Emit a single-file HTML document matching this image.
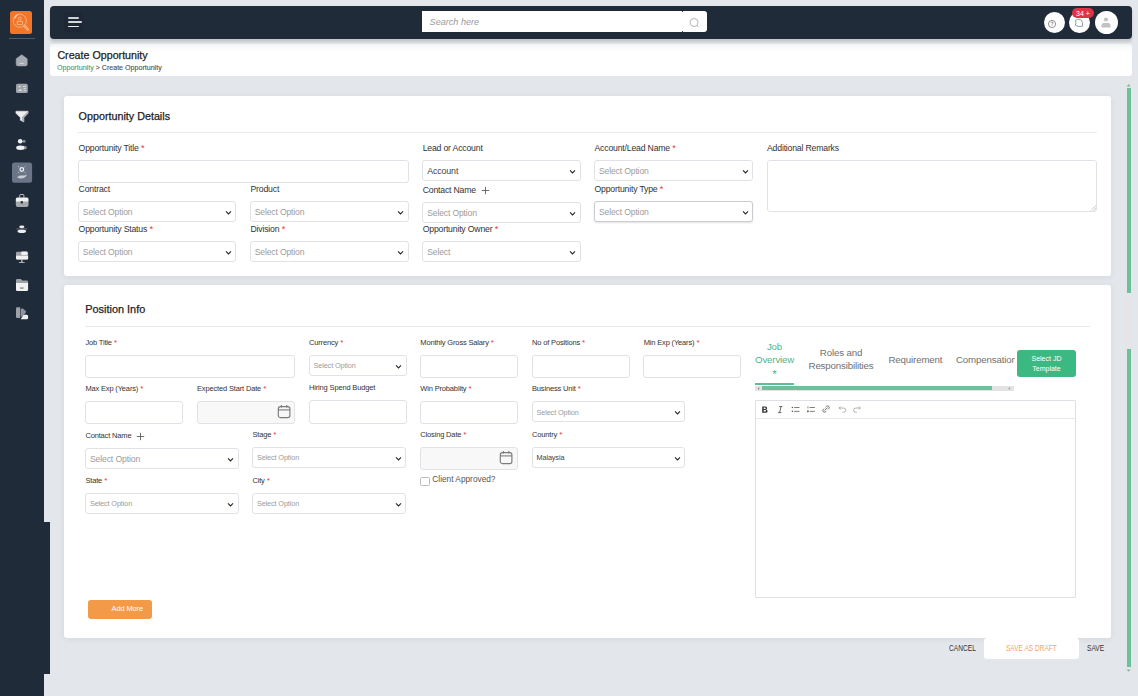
<!DOCTYPE html>
<html><head><meta charset="utf-8"><style>
html,body{margin:0;padding:0;width:1138px;height:696px;overflow:hidden;background:#e3e6ea;font-family:"Liberation Sans",sans-serif;position:relative}
</style></head><body>
<div style="position:absolute;left:0px;top:0px;width:44px;height:696px;background:#202b39"></div>
<div style="position:absolute;left:44px;top:522px;width:6px;height:152px;background:#202b39"></div>
<div style="position:absolute;left:9.5px;top:10.5px;width:22.5px;height:23.1px;background:#f37528;border-radius:2.5px"></div>
<svg style="position:absolute;left:0;top:0" width="40" height="40" viewBox="0 0 40 40">
<circle cx="19.8" cy="20.7" r="6.6" fill="none" stroke="#f8c39c" stroke-width="0.75"/>
<path d="M14.6 18.5 Q15.5 16 17.5 14.8" fill="none" stroke="#fbd7bd" stroke-width="1.2"/>
<circle cx="19.8" cy="18.6" r="1.5" fill="none" stroke="#f8c39c" stroke-width="0.75"/>
<rect x="17.2" y="21.3" width="5.2" height="3.3" fill="none" stroke="#f8c39c" stroke-width="0.75"/>
<path d="M24.3 25.8 L27.9 29.6" fill="none" stroke="#f8c39c" stroke-width="2.3" stroke-linecap="round"/>
<path d="M24.3 25.8 L27.9 29.6" fill="none" stroke="#f37528" stroke-width="0.8" stroke-linecap="round"/>
</svg>
<div style="position:absolute;left:9px;top:38px;width:26px;height:1px;background:#4d5868"></div>
<svg style="position:absolute;left:0;top:0" width="44" height="330" viewBox="0 0 44 330">
<path d="M16.2 58.8 L21.7 54.8 L27.2 58.8 V64.2 Q27.2 65.9 25.5 65.9 H17.9 Q16.2 65.9 16.2 64.2 Z" fill="#a6aab1" stroke="#a6aab1" stroke-width="0.6" stroke-linejoin="round"/>
<rect x="19.8" y="62.9" width="3.9" height="1" fill="#d6d8db"/>
<rect x="16" y="83.8" width="11.8" height="9.3" rx="1.6" fill="#9ea2a9"/>
<rect x="18.8" y="85.8" width="1.6" height="1.6" fill="#e6e7e9"/><path d="M17.8 90.8 Q18.8 89 20.5 89.2 Q21.8 89.4 22.2 90.8Z" fill="#e6e7e9"/>
<rect x="23" y="86" width="3" height="0.9" fill="#d8dadd"/><rect x="23.5" y="88" width="2.5" height="0.9" fill="#d8dadd"/><rect x="23.5" y="90" width="2.5" height="0.9" fill="#d8dadd"/>
<path d="M15.9 111.2 H28.1 V113.2 L23.9 117.6 V121.9 L20.3 120.2 V117.6 L15.9 113.2Z" fill="#eeeeef" stroke="#eeeeef" stroke-width="0.5" stroke-linejoin="round"/>
<path d="M28.1 111.2 V113.2 L23.9 117.6 V121.9 L22 121 V117 Z" fill="#a9adb3"/>
<circle cx="24" cy="141.3" r="1.5" fill="#8d939b"/><circle cx="20.2" cy="141.3" r="2.3" fill="#f2f2f2"/>
<ellipse cx="23.5" cy="147.6" rx="3.4" ry="1.9" fill="#8d939b"/><ellipse cx="20.3" cy="147.7" rx="4.1" ry="2.2" fill="#f2f2f2"/>
<rect x="12" y="162.6" width="20.1" height="20.1" rx="2.5" fill="#6a7588"/>
<circle cx="21.8" cy="169.5" r="1.8" fill="none" stroke="#f0f1f3" stroke-width="1.3"/>
<path d="M19 167 L18.2 166.3 M24.6 167 L25.4 166.3 M19 172 L18.2 172.7 M24.6 172 L25.4 172.7" stroke="#dfe2e7" stroke-width="0.9"/>
<path d="M17.2 177.5 Q18.5 175.2 21 175.4 Q23 175.6 24.5 175.4 Q26 175 27 174.6 Q26 177.5 23 178.3 Q20 178.8 17.2 177.5Z" fill="#c9cdd5"/>
<path d="M19.7 197.7 V195.4 Q19.7 194.5 20.6 194.5 H23 Q23.9 194.5 23.9 195.4 V197.7" fill="none" stroke="#e5e5e5" stroke-width="0.8"/>
<rect x="15.8" y="197.5" width="12.7" height="5" rx="1.5" fill="#f2f2f2"/>
<path d="M15.8 201.5 H28.5 V205 Q28.5 206.9 26.6 206.9 H17.7 Q15.8 206.9 15.8 205Z" fill="#a6a9ae"/>
<rect x="20.7" y="201.2" width="2.2" height="2.2" fill="#202b39"/>
<ellipse cx="21.8" cy="226.8" rx="2.6" ry="1.4" fill="#eeeeee"/>
<ellipse cx="21.8" cy="231.2" rx="4.3" ry="1.8" fill="#eeeeee"/>
<rect x="16.5" y="228.6" width="10.6" height="0.7" fill="#8a9098"/>
<path d="M16 253 Q16 251.8 17.2 251.8 H26.9 Q28.1 251.8 28.1 253 V258.3 Q28.1 259.5 26.9 259.5 H17.2 Q16 259.5 16 258.3Z" fill="#9fa3a9"/>
<path d="M16 255.8 H28.1 V258.3 Q28.1 259.5 26.9 259.5 H17.2 Q16 259.5 16 258.3Z" fill="#f0f0f0"/>
<rect x="21.2" y="251.5" width="6.3" height="3.4" rx="1.2" fill="#f0f0f0"/>
<rect x="21.3" y="259.5" width="1.1" height="2.6" fill="#dcdcdc"/><rect x="18.9" y="261.9" width="5.8" height="0.9" rx="0.4" fill="#dcdcdc"/>
<path d="M16 280.3 Q16 279 17.3 279 H20.8 L22.3 280.5 H26.8 Q28.1 280.5 28.1 281.8 V283.5 H16Z" fill="#9fa3a9"/>
<path d="M16 283 H28.1 V289.8 Q28.1 291.1 26.8 291.1 H17.3 Q16 291.1 16 289.8Z" fill="#f2f2f2"/>
<rect x="20" y="287.5" width="3.6" height="1.1" fill="#6b7280"/>
<path d="M16 308.5 Q16 307.2 17.3 307.2 H20.1 V318.1 H17.3 Q16 318.1 16 316.8Z" fill="#9da1a8"/>
<path d="M20.6 309 Q21.5 308 22.8 308.6 L25.5 310.8 Q26.5 311.8 25.5 313 L22.5 316.5 H20.6Z" fill="#8f949b"/>
<path d="M20.6 319.3 L23.3 315.2 Q24 314.5 25 314.7 H26.8 Q28.1 314.9 28.1 316.2 V318 Q28.1 319.3 26.8 319.3Z" fill="#f0f0f0"/>
</svg>
<div style="position:absolute;left:50px;top:44px;width:1082px;height:32px;background:linear-gradient(#f2f3f4,#fbfbfb 4px,#fff 8px);border-radius:3px"></div>
<div style="position:absolute;left:50px;top:6px;width:1082px;height:33px;background:#202b39;border-radius:4px;box-shadow:0 3px 3px rgba(0,0,0,0.14)"></div>
<div style="position:absolute;left:64.4px;top:12.4px;width:18.89999999999999px;height:19.700000000000003px;background:#1d2735;border-radius:3px"></div>
<div style="position:absolute;left:67.6px;top:17.1px;width:11.700000000000003px;height:1.5999999999999979px;background:#cfd1d4;border-radius:1px"></div>
<div style="position:absolute;left:67.6px;top:21.2px;width:14.700000000000003px;height:1.6000000000000014px;background:#d6d8da;border-radius:1px"></div>
<div style="position:absolute;left:67.6px;top:25.5px;width:11.700000000000003px;height:1.5px;background:#ebebeb;border-radius:1px"></div>
<div style="position:absolute;left:421.7px;top:10.6px;width:285.09999999999997px;height:21.699999999999996px;background:#fff;border-radius:0 3px 3px 0"></div>
<div style="position:absolute;left:682px;top:10.6px;width:1px;height:1px;background:#3a4452"></div><div style="position:absolute;left:682px;top:31.3px;width:1px;height:1px;background:#3a4452"></div>
<div style="position:absolute;left:429.6px;top:17.57px;font-size:9.1px;line-height:1;color:#9a9a9a;white-space:nowrap;font-style:italic">Search here</div>
<svg style="position:absolute;left:688px;top:17px" width="12" height="12" viewBox="0 0 12 12"><circle cx="6.1" cy="5.5" r="4" fill="none" stroke="#ababab" stroke-width="0.9"/><line x1="8.9" y1="8.4" x2="10.6" y2="10.1" stroke="#ababab" stroke-width="0.9"/></svg>
<div style="position:absolute;left:1044px;top:12px;width:21px;height:21px;border-radius:50%;background:#fff"></div>
<svg style="position:absolute;left:1046px;top:17.6px" width="12" height="12" viewBox="0 0 12 12"><circle cx="6" cy="6" r="3.6" fill="none" stroke="#777" stroke-width="0.8"/><path d="M4.9 5.1 Q5 4 6 4 Q7.1 4 7.1 5 Q7.1 5.7 6 6.1 V6.6" fill="none" stroke="#777" stroke-width="0.7"/><circle cx="6" cy="7.7" r="0.4" fill="#777"/></svg>
<div style="position:absolute;left:1069px;top:12px;width:20.5px;height:21px;border-radius:50%;background:#fff"></div>
<svg style="position:absolute;left:1073px;top:16.5px" width="12" height="12" viewBox="0 0 12 12"><path d="M2.6 3.4 Q4.5 1.6 7.2 2.4 Q9.2 3.2 9.3 5.6 L9.6 8.6 L8.2 9.4 Q5.5 9.8 3.2 8.6 L2.4 8.2 Q3.2 6.5 2.6 3.4Z" fill="none" stroke="#7a7f88" stroke-width="0.8"/><path d="M9.3 8.8 L10 9.8" stroke="#7a90b0" stroke-width="0.7"/></svg>
<div style="position:absolute;left:1072.4px;top:8.3px;width:21.199999999999818px;height:9.3px;background:#dc3545;border-radius:5px"></div>
<div style="position:absolute;left:1076px;top:9.65px;font-size:7px;line-height:1;color:#fff;white-space:nowrap;">34 +</div>
<div style="position:absolute;left:1094.5px;top:10.5px;width:23px;height:23px;border-radius:50%;background:#fff"></div>
<svg style="position:absolute;left:1099px;top:15px" width="14" height="14" viewBox="0 0 14 14"><circle cx="7" cy="4.5" r="2.1" fill="#c2c2c2"/><path d="M2.5 12.5 V10.5 Q2.5 8 5 8 H9 Q11.5 8 11.5 10.5 V12.5Z" fill="#c2c2c2"/></svg>
<div style="position:absolute;left:57.4px;top:49.51px;font-size:10.7px;line-height:1;color:#222;white-space:nowrap;-webkit-text-stroke:0.25px #222">Create Opportunity</div>
<div style="position:absolute;left:57.4px;top:63.57px;font-size:7.8px;line-height:1;color:#4a4a4a;white-space:nowrap;transform:scaleX(0.91);transform-origin:0 0;-webkit-text-stroke:0.1px #4a4a4a"><span style="color:#46ad84">Opportunity</span> &gt; Create Opportunity</div>
<div style="position:absolute;left:1125.2px;top:81.2px;width:6.7999999999999545px;height:592.3px;background:#e5e4e6"></div>
<div style="position:absolute;left:1126.8px;top:87.9px;width:4.2999999999999545px;height:205.1px;background:#6cc19d"></div>
<div style="position:absolute;left:1126.8px;top:349px;width:4.2999999999999545px;height:318px;background:#6cc19d"></div>
<svg style="position:absolute;left:1125px;top:82px" width="7" height="6" viewBox="0 0 7 6"><path d="M1.6 4.4 L3.6 2 L5.6 4.4Z" fill="#6cc19d"/></svg>
<svg style="position:absolute;left:1125px;top:667.5px" width="7" height="6" viewBox="0 0 7 6"><path d="M1.6 1.4 L3.6 3.8 L5.6 1.4Z" fill="#6cc19d"/></svg>
<div style="position:absolute;left:64px;top:96px;width:1047px;height:179.5px;background:#fff;border-radius:3px;box-shadow:0 1px 6px rgba(40,50,70,0.08)"></div>
<div style="position:absolute;left:64px;top:285px;width:1047px;height:352.5px;background:#fff;border-radius:3px;box-shadow:0 1px 6px rgba(40,50,70,0.08)"></div>
<div style="position:absolute;left:78.6px;top:110.56px;font-size:10.75px;line-height:1;color:#222;white-space:nowrap;-webkit-text-stroke:0.25px #222">Opportunity Details</div>
<div style="position:absolute;left:78px;top:132px;width:1019px;height:1px;background:#ebebeb"></div>
<div style="position:absolute;left:78.6px;top:143.60px;font-size:8.7px;line-height:1;color:#333;white-space:nowrap;letter-spacing:-0.19px">Opportunity Title<span style="color:#e53935;font-size:1.06em;line-height:0"> *</span></div>
<div style="position:absolute;left:422.7px;top:143.60px;font-size:8.7px;line-height:1;color:#333;white-space:nowrap;letter-spacing:-0.19px">Lead or Account</div>
<div style="position:absolute;left:594.5px;top:143.60px;font-size:8.7px;line-height:1;color:#333;white-space:nowrap;letter-spacing:-0.19px">Account/Lead Name<span style="color:#e53935;font-size:1.06em;line-height:0"> *</span></div>
<div style="position:absolute;left:767px;top:144.00px;font-size:8.7px;line-height:1;color:#333;white-space:nowrap;letter-spacing:-0.19px">Additional Remarks</div>
<div style="position:absolute;left:77.5px;top:159.5px;width:331.0px;height:23.19999999999999px;box-sizing:border-box;border:1px solid #dfe2e7;border-radius:3px;background:#fff"></div>
<div style="position:absolute;left:422.2px;top:160.2px;width:158.59999999999997px;height:20.900000000000006px;box-sizing:border-box;border:1px solid #dfe2e7;border-radius:3px;background:#fff;"><div style="position:absolute;left:4px;top:5.60px;font-size:8.9px;letter-spacing:-0.15px;line-height:1;color:#444;white-space:nowrap">Account</div><svg style="position:absolute;right:3.5px;top:7.950000000000003px" width="7" height="5" viewBox="0 0 7 5"><path d="M1 1.4 L3.5 3.9 L6 1.4" fill="none" stroke="#222" stroke-width="1.05"/></svg></div>
<div style="position:absolute;left:594.0px;top:160.2px;width:159.20000000000005px;height:20.900000000000006px;box-sizing:border-box;border:1px solid #dfe2e7;border-radius:3px;background:#fff;"><div style="position:absolute;left:4px;top:5.75px;font-size:8.6px;letter-spacing:-0.15px;line-height:1;color:#9c9c9c;white-space:nowrap">Select Option</div><svg style="position:absolute;right:3.5px;top:7.950000000000003px" width="7" height="5" viewBox="0 0 7 5"><path d="M1 1.4 L3.5 3.9 L6 1.4" fill="none" stroke="#222" stroke-width="1.05"/></svg></div>
<div style="position:absolute;left:766.5px;top:159.5px;width:330.29999999999995px;height:52.30000000000001px;box-sizing:border-box;border:1px solid #dfe2e7;border-radius:3px;background:#fff"></div>
<svg style="position:absolute;left:1089px;top:204px" width="8" height="8" viewBox="0 0 8 8"><path d="M7 1.6 L2 6.6 M7 4.1 L4.5 6.6" stroke="#888" stroke-width="0.7" stroke-dasharray="0.8 0.5"/></svg>
<div style="position:absolute;left:78.6px;top:185.00px;font-size:8.7px;line-height:1;color:#333;white-space:nowrap;letter-spacing:-0.19px">Contract</div>
<div style="position:absolute;left:250.5px;top:185.00px;font-size:8.7px;line-height:1;color:#333;white-space:nowrap;letter-spacing:-0.19px">Product</div>
<div style="position:absolute;left:422.7px;top:186.31px;font-size:8.7px;line-height:1;color:#333;white-space:nowrap;letter-spacing:-0.19px">Contact Name</div>
<svg style="position:absolute;left:481px;top:185.5px" width="9" height="9" viewBox="0 0 9 9"><path d="M4.5 0.8 V8.2 M0.8 4.5 H8.2" stroke="#555" stroke-width="0.85"/></svg>
<div style="position:absolute;left:594.5px;top:184.70px;font-size:8.7px;line-height:1;color:#333;white-space:nowrap;letter-spacing:-0.19px">Opportunity Type<span style="color:#e53935;font-size:1.06em;line-height:0"> *</span></div>
<div style="position:absolute;left:77.8px;top:200.8px;width:158.5px;height:21.299999999999983px;box-sizing:border-box;border:1px solid #dfe2e7;border-radius:3px;background:#fff;"><div style="position:absolute;left:4px;top:5.95px;font-size:8.6px;letter-spacing:-0.15px;line-height:1;color:#9c9c9c;white-space:nowrap">Select Option</div><svg style="position:absolute;right:3.5px;top:8.149999999999991px" width="7" height="5" viewBox="0 0 7 5"><path d="M1 1.4 L3.5 3.9 L6 1.4" fill="none" stroke="#222" stroke-width="1.05"/></svg></div>
<div style="position:absolute;left:249.7px;top:200.8px;width:159.3px;height:21.299999999999983px;box-sizing:border-box;border:1px solid #dfe2e7;border-radius:3px;background:#fff;"><div style="position:absolute;left:4px;top:5.95px;font-size:8.6px;letter-spacing:-0.15px;line-height:1;color:#9c9c9c;white-space:nowrap">Select Option</div><svg style="position:absolute;right:3.5px;top:8.149999999999991px" width="7" height="5" viewBox="0 0 7 5"><path d="M1 1.4 L3.5 3.9 L6 1.4" fill="none" stroke="#222" stroke-width="1.05"/></svg></div>
<div style="position:absolute;left:422.2px;top:202.3px;width:158.59999999999997px;height:20.899999999999977px;box-sizing:border-box;border:1px solid #dfe2e7;border-radius:3px;background:#fff;"><div style="position:absolute;left:4px;top:5.75px;font-size:8.6px;letter-spacing:-0.15px;line-height:1;color:#9c9c9c;white-space:nowrap">Select Option</div><svg style="position:absolute;right:3.5px;top:7.949999999999989px" width="7" height="5" viewBox="0 0 7 5"><path d="M1 1.4 L3.5 3.9 L6 1.4" fill="none" stroke="#222" stroke-width="1.05"/></svg></div>
<div style="position:absolute;left:594.0px;top:201.0px;width:159.20000000000005px;height:21.30000000000001px;box-sizing:border-box;border:1px solid #dfe2e7;border-radius:3px;background:#fff;border-color:#c9ccd1;box-shadow:0 1px 2px rgba(0,0,0,0.12)"><div style="position:absolute;left:4px;top:5.95px;font-size:8.6px;letter-spacing:-0.15px;line-height:1;color:#9c9c9c;white-space:nowrap">Select Option</div><svg style="position:absolute;right:3.5px;top:8.150000000000006px" width="7" height="5" viewBox="0 0 7 5"><path d="M1 1.4 L3.5 3.9 L6 1.4" fill="none" stroke="#222" stroke-width="1.05"/></svg></div>
<div style="position:absolute;left:78.6px;top:224.81px;font-size:8.7px;line-height:1;color:#333;white-space:nowrap;letter-spacing:-0.19px">Opportunity Status<span style="color:#e53935;font-size:1.06em;line-height:0"> *</span></div>
<div style="position:absolute;left:250.5px;top:224.81px;font-size:8.7px;line-height:1;color:#333;white-space:nowrap;letter-spacing:-0.19px">Division<span style="color:#e53935;font-size:1.06em;line-height:0"> *</span></div>
<div style="position:absolute;left:422.7px;top:225.00px;font-size:8.7px;line-height:1;color:#333;white-space:nowrap;letter-spacing:-0.19px">Opportunity Owner<span style="color:#e53935;font-size:1.06em;line-height:0"> *</span></div>
<div style="position:absolute;left:77.8px;top:241.0px;width:158.5px;height:20.80000000000001px;box-sizing:border-box;border:1px solid #dfe2e7;border-radius:3px;background:#fff;"><div style="position:absolute;left:4px;top:5.70px;font-size:8.6px;letter-spacing:-0.15px;line-height:1;color:#9c9c9c;white-space:nowrap">Select Option</div><svg style="position:absolute;right:3.5px;top:7.900000000000006px" width="7" height="5" viewBox="0 0 7 5"><path d="M1 1.4 L3.5 3.9 L6 1.4" fill="none" stroke="#222" stroke-width="1.05"/></svg></div>
<div style="position:absolute;left:249.7px;top:241.0px;width:159.3px;height:20.80000000000001px;box-sizing:border-box;border:1px solid #dfe2e7;border-radius:3px;background:#fff;"><div style="position:absolute;left:4px;top:5.70px;font-size:8.6px;letter-spacing:-0.15px;line-height:1;color:#9c9c9c;white-space:nowrap">Select Option</div><svg style="position:absolute;right:3.5px;top:7.900000000000006px" width="7" height="5" viewBox="0 0 7 5"><path d="M1 1.4 L3.5 3.9 L6 1.4" fill="none" stroke="#222" stroke-width="1.05"/></svg></div>
<div style="position:absolute;left:422.2px;top:240.9px;width:158.59999999999997px;height:20.900000000000006px;box-sizing:border-box;border:1px solid #dfe2e7;border-radius:3px;background:#fff;"><div style="position:absolute;left:4px;top:5.75px;font-size:8.6px;letter-spacing:-0.15px;line-height:1;color:#9c9c9c;white-space:nowrap">Select</div><svg style="position:absolute;right:3.5px;top:7.950000000000003px" width="7" height="5" viewBox="0 0 7 5"><path d="M1 1.4 L3.5 3.9 L6 1.4" fill="none" stroke="#222" stroke-width="1.05"/></svg></div>
<div style="position:absolute;left:85.3px;top:304.13px;font-size:10.9px;line-height:1;color:#222;white-space:nowrap;-webkit-text-stroke:0.25px #222">Position Info</div>
<div style="position:absolute;left:85px;top:326px;width:1005px;height:1px;background:#ebebeb"></div>
<div style="position:absolute;left:85.4px;top:338.93px;font-size:7.5px;line-height:1;color:#333;white-space:nowrap;letter-spacing:-0.16px">Job Title<span style="color:#e53935;font-size:1.06em;line-height:0"> *</span></div>
<div style="position:absolute;left:309px;top:338.93px;font-size:7.5px;line-height:1;color:#333;white-space:nowrap;letter-spacing:-0.16px">Currency<span style="color:#e53935;font-size:1.06em;line-height:0"> *</span></div>
<div style="position:absolute;left:420.3px;top:338.93px;font-size:7.5px;line-height:1;color:#333;white-space:nowrap;letter-spacing:-0.16px">Monthly Gross Salary<span style="color:#e53935;font-size:1.06em;line-height:0"> *</span></div>
<div style="position:absolute;left:532px;top:338.93px;font-size:7.5px;line-height:1;color:#333;white-space:nowrap;letter-spacing:-0.16px">No of Positions<span style="color:#e53935;font-size:1.06em;line-height:0"> *</span></div>
<div style="position:absolute;left:643.7px;top:338.93px;font-size:7.5px;line-height:1;color:#333;white-space:nowrap;letter-spacing:-0.16px">Min Exp (Years)<span style="color:#e53935;font-size:1.06em;line-height:0"> *</span></div>
<div style="position:absolute;left:84.9px;top:354.8px;width:210.29999999999998px;height:23.099999999999966px;box-sizing:border-box;border:1px solid #dfe2e7;border-radius:3px;background:#fff"></div>
<div style="position:absolute;left:308.5px;top:354.9px;width:98.0px;height:21.0px;box-sizing:border-box;border:1px solid #dfe2e7;border-radius:3px;background:#fff;"><div style="position:absolute;left:4px;top:6.45px;font-size:7.3px;letter-spacing:-0.12px;line-height:1;color:#9c9c9c;white-space:nowrap">Select Option</div><svg style="position:absolute;right:3.5px;top:8.0px" width="7" height="5" viewBox="0 0 7 5"><path d="M1 1.4 L3.5 3.9 L6 1.4" fill="none" stroke="#222" stroke-width="1.05"/></svg></div>
<div style="position:absolute;left:419.8px;top:354.8px;width:98.09999999999997px;height:23.19999999999999px;box-sizing:border-box;border:1px solid #dfe2e7;border-radius:3px;background:#fff"></div>
<div style="position:absolute;left:531.5px;top:354.8px;width:98.39999999999998px;height:23.19999999999999px;box-sizing:border-box;border:1px solid #dfe2e7;border-radius:3px;background:#fff"></div>
<div style="position:absolute;left:643.2px;top:354.8px;width:98.09999999999991px;height:23.19999999999999px;box-sizing:border-box;border:1px solid #dfe2e7;border-radius:3px;background:#fff"></div>
<div style="position:absolute;left:85.4px;top:385.03px;font-size:7.5px;line-height:1;color:#333;white-space:nowrap;letter-spacing:-0.16px">Max Exp (Years)<span style="color:#e53935;font-size:1.06em;line-height:0"> *</span></div>
<div style="position:absolute;left:197px;top:385.03px;font-size:7.5px;line-height:1;color:#333;white-space:nowrap;letter-spacing:-0.16px">Expected Start Date<span style="color:#e53935;font-size:1.06em;line-height:0"> *</span></div>
<div style="position:absolute;left:309px;top:384.23px;font-size:7.5px;line-height:1;color:#333;white-space:nowrap;letter-spacing:-0.16px">Hiring Spend Budget</div>
<div style="position:absolute;left:420.3px;top:384.73px;font-size:7.5px;line-height:1;color:#333;white-space:nowrap;letter-spacing:-0.16px">Win Probablity<span style="color:#e53935;font-size:1.06em;line-height:0"> *</span></div>
<div style="position:absolute;left:532px;top:384.73px;font-size:7.5px;line-height:1;color:#333;white-space:nowrap;letter-spacing:-0.16px">Business Unit<span style="color:#e53935;font-size:1.06em;line-height:0"> *</span></div>
<div style="position:absolute;left:84.9px;top:400.8px;width:98.1px;height:23.19999999999999px;box-sizing:border-box;border:1px solid #dfe2e7;border-radius:3px;background:#fff"></div>
<div style="position:absolute;left:196.5px;top:400.8px;width:98.60000000000002px;height:23.399999999999977px;box-sizing:border-box;border:1px solid #dfe2e7;border-radius:3px;background:#f8f8f8"></div>
<svg style="position:absolute;left:276.6px;top:404.3px" width="14" height="15" viewBox="0 0 14 15"><rect x="1.3" y="2.6" width="11.6" height="11" rx="2.2" fill="none" stroke="#7a7a7a" stroke-width="1.15"/><line x1="1.3" y1="5.9" x2="12.9" y2="5.9" stroke="#7a7a7a" stroke-width="1.1"/><line x1="4.4" y1="0.9" x2="4.4" y2="3.6" stroke="#7a7a7a" stroke-width="1.1"/><line x1="9.8" y1="0.9" x2="9.8" y2="3.6" stroke="#7a7a7a" stroke-width="1.1"/></svg>
<div style="position:absolute;left:308.5px;top:399.9px;width:98.0px;height:23.80000000000001px;box-sizing:border-box;border:1px solid #dfe2e7;border-radius:3px;background:#fff"></div>
<div style="position:absolute;left:419.8px;top:400.7px;width:98.09999999999997px;height:23.19999999999999px;box-sizing:border-box;border:1px solid #dfe2e7;border-radius:3px;background:#fff"></div>
<div style="position:absolute;left:531.5px;top:401.0px;width:153.79999999999995px;height:21.30000000000001px;box-sizing:border-box;border:1px solid #dfe2e7;border-radius:3px;background:#fff;"><div style="position:absolute;left:4px;top:6.60px;font-size:7.3px;letter-spacing:-0.12px;line-height:1;color:#9c9c9c;white-space:nowrap">Select Option</div><svg style="position:absolute;right:3.5px;top:8.150000000000006px" width="7" height="5" viewBox="0 0 7 5"><path d="M1 1.4 L3.5 3.9 L6 1.4" fill="none" stroke="#222" stroke-width="1.05"/></svg></div>
<div style="position:absolute;left:85.4px;top:431.62px;font-size:7.5px;line-height:1;color:#333;white-space:nowrap;letter-spacing:-0.16px">Contact Name</div>
<svg style="position:absolute;left:135.5px;top:431.5px" width="9" height="9" viewBox="0 0 9 9"><path d="M4.5 0.8 V8.2 M0.8 4.5 H8.2" stroke="#555" stroke-width="0.85"/></svg>
<div style="position:absolute;left:252.4px;top:430.73px;font-size:7.5px;line-height:1;color:#333;white-space:nowrap;letter-spacing:-0.16px">Stage<span style="color:#e53935;font-size:1.06em;line-height:0"> *</span></div>
<div style="position:absolute;left:420.3px;top:430.93px;font-size:7.5px;line-height:1;color:#333;white-space:nowrap;letter-spacing:-0.16px">Closing Date<span style="color:#e53935;font-size:1.06em;line-height:0"> *</span></div>
<div style="position:absolute;left:532px;top:430.93px;font-size:7.5px;line-height:1;color:#333;white-space:nowrap;letter-spacing:-0.16px">Country<span style="color:#e53935;font-size:1.06em;line-height:0"> *</span></div>
<div style="position:absolute;left:84.9px;top:448.0px;width:153.79999999999998px;height:20.899999999999977px;box-sizing:border-box;border:1px solid #dfe2e7;border-radius:3px;background:#fff;"><div style="position:absolute;left:4px;top:5.70px;font-size:8.7px;letter-spacing:-0.15px;line-height:1;color:#9c9c9c;white-space:nowrap">Select Option</div><svg style="position:absolute;right:3.5px;top:7.949999999999989px" width="7" height="5" viewBox="0 0 7 5"><path d="M1 1.4 L3.5 3.9 L6 1.4" fill="none" stroke="#222" stroke-width="1.05"/></svg></div>
<div style="position:absolute;left:251.9px;top:446.7px;width:154.6px;height:21.30000000000001px;box-sizing:border-box;border:1px solid #dfe2e7;border-radius:3px;background:#fff;"><div style="position:absolute;left:4px;top:6.60px;font-size:7.3px;letter-spacing:-0.12px;line-height:1;color:#9c9c9c;white-space:nowrap">Select Option</div><svg style="position:absolute;right:3.5px;top:8.150000000000006px" width="7" height="5" viewBox="0 0 7 5"><path d="M1 1.4 L3.5 3.9 L6 1.4" fill="none" stroke="#222" stroke-width="1.05"/></svg></div>
<div style="position:absolute;left:419.8px;top:446.5px;width:98.09999999999997px;height:23.19999999999999px;box-sizing:border-box;border:1px solid #dfe2e7;border-radius:3px;background:#f8f8f8"></div>
<svg style="position:absolute;left:499.4px;top:450px" width="14" height="15" viewBox="0 0 14 15"><rect x="1.3" y="2.6" width="11.6" height="11" rx="2.2" fill="none" stroke="#7a7a7a" stroke-width="1.15"/><line x1="1.3" y1="5.9" x2="12.9" y2="5.9" stroke="#7a7a7a" stroke-width="1.1"/><line x1="4.4" y1="0.9" x2="4.4" y2="3.6" stroke="#7a7a7a" stroke-width="1.1"/><line x1="9.8" y1="0.9" x2="9.8" y2="3.6" stroke="#7a7a7a" stroke-width="1.1"/></svg>
<div style="position:absolute;left:531.5px;top:446.9px;width:153.79999999999995px;height:21.30000000000001px;box-sizing:border-box;border:1px solid #dfe2e7;border-radius:3px;background:#fff;"><div style="position:absolute;left:4px;top:6.60px;font-size:7.3px;letter-spacing:-0.12px;line-height:1;color:#444;white-space:nowrap">Malaysia</div><svg style="position:absolute;right:3.5px;top:8.150000000000006px" width="7" height="5" viewBox="0 0 7 5"><path d="M1 1.4 L3.5 3.9 L6 1.4" fill="none" stroke="#222" stroke-width="1.05"/></svg></div>
<div style="position:absolute;left:420.3px;top:476.5px;width:9.3px;height:9.7px;box-sizing:border-box;border:1px solid #bbb;border-radius:1.5px;background:#fff"></div>
<div style="position:absolute;left:432.3px;top:475.44px;font-size:8.3px;line-height:1;color:#555;white-space:nowrap;">Client Approved?</div>
<div style="position:absolute;left:85.4px;top:476.62px;font-size:7.5px;line-height:1;color:#333;white-space:nowrap;letter-spacing:-0.16px">State<span style="color:#e53935;font-size:1.06em;line-height:0"> *</span></div>
<div style="position:absolute;left:252.4px;top:476.62px;font-size:7.5px;line-height:1;color:#333;white-space:nowrap;letter-spacing:-0.16px">City<span style="color:#e53935;font-size:1.06em;line-height:0"> *</span></div>
<div style="position:absolute;left:84.9px;top:492.9px;width:153.79999999999998px;height:21.0px;box-sizing:border-box;border:1px solid #dfe2e7;border-radius:3px;background:#fff;"><div style="position:absolute;left:4px;top:6.45px;font-size:7.3px;letter-spacing:-0.12px;line-height:1;color:#9c9c9c;white-space:nowrap">Select Option</div><svg style="position:absolute;right:3.5px;top:8.0px" width="7" height="5" viewBox="0 0 7 5"><path d="M1 1.4 L3.5 3.9 L6 1.4" fill="none" stroke="#222" stroke-width="1.05"/></svg></div>
<div style="position:absolute;left:251.9px;top:492.9px;width:154.6px;height:21.0px;box-sizing:border-box;border:1px solid #dfe2e7;border-radius:3px;background:#fff;"><div style="position:absolute;left:4px;top:6.45px;font-size:7.3px;letter-spacing:-0.12px;line-height:1;color:#9c9c9c;white-space:nowrap">Select Option</div><svg style="position:absolute;right:3.5px;top:8.0px" width="7" height="5" viewBox="0 0 7 5"><path d="M1 1.4 L3.5 3.9 L6 1.4" fill="none" stroke="#222" stroke-width="1.05"/></svg></div>
<div style="position:absolute;left:88.3px;top:599.8px;width:63.500000000000014px;height:19.100000000000023px;background:#f39a48;border-radius:3px"></div>
<div style="position:absolute;left:111.6px;top:604.61px;font-size:7.4px;line-height:1;color:#fff;white-space:nowrap;letter-spacing:-0.08px">Add More</div>
<div style="position:absolute;left:755px;top:339.5px;width:39px;text-align:center;font-size:9.7px;letter-spacing:-0.15px;line-height:13.2px;color:#4fb48a">Job<br>Overview<br><span style="font-size:1.2em;line-height:0;position:relative;top:2px">*</span></div>
<div style="position:absolute;left:800px;top:346px;width:82px;text-align:center;font-size:9.7px;letter-spacing:-0.15px;line-height:13px;color:#707070">Roles and<br>Responsibilities</div>
<div style="position:absolute;left:888.5px;top:354.56px;font-size:9.7px;line-height:1;color:#707070;white-space:nowrap;letter-spacing:-0.15px">Requirement</div>
<div style="position:absolute;left:956px;top:352.5px;width:59px;overflow:hidden;font-size:9.7px;letter-spacing:-0.15px;line-height:13px;color:#707070;white-space:nowrap">Compensation</div>
<div style="position:absolute;left:1016.9px;top:350px;width:59.19999999999993px;height:26.80000000000001px;background:#3cb883;border-radius:3px"></div>
<div style="position:absolute;left:1016.9px;top:354px;width:59.2px;text-align:center;font-size:7px;line-height:9.5px;color:#fff">Select JD<br>Template</div>
<div style="position:absolute;left:755px;top:383px;width:38.799999999999955px;height:2px;background:#5fbd93"></div>
<div style="position:absolute;left:755.2px;top:385.5px;width:258.5px;height:5.300000000000011px;background:#e3e3e3"></div>
<svg style="position:absolute;left:756px;top:386px" width="5" height="5" viewBox="0 0 5 5"><path d="M3.2 1.2 L1.6 2.5 L3.2 3.8Z" fill="#777"/></svg>
<svg style="position:absolute;left:1007px;top:386px" width="5" height="5" viewBox="0 0 5 5"><path d="M1.8 1.2 L3.4 2.5 L1.8 3.8Z" fill="#888"/></svg>
<div style="position:absolute;left:761.9px;top:386px;width:229.70000000000005px;height:4.300000000000011px;background:#6cc19d"></div>
<div style="position:absolute;left:755.2px;top:400.3px;width:320.8px;height:197.7px;box-sizing:border-box;border:1px solid #dde0e5;border-radius:1px;"></div>
<div style="position:absolute;left:756px;top:418.2px;width:319px;height:1.0px;background:#e6e8eb"></div>
<svg style="position:absolute;left:755px;top:400px" width="120" height="19" viewBox="0 0 120 19">
<path d="M7.2 6.5 H10.3 Q12.2 6.5 12.2 8.1 Q12.2 9.2 11 9.5 Q12.6 9.8 12.6 11.2 Q12.6 12.7 10.5 12.7 H7.2Z M8.7 7.6 V9.1 H10.1 Q10.8 9.1 10.8 8.35 Q10.8 7.6 10.1 7.6Z M8.7 10.1 V11.6 H10.3 Q11.1 11.6 11.1 10.85 Q11.1 10.1 10.3 10.1Z" fill="#333" fill-rule="evenodd"/>
<path d="M24 6.6 H27.5 M23.1 12.6 H26.4 M26 6.6 L24.6 12.6" fill="none" stroke="#444" stroke-width="0.8"/>
<g fill="#555"><circle cx="37.4" cy="7.4" r="0.75"/><circle cx="37.4" cy="11.3" r="0.75"/><rect x="39.2" y="7" width="5.3" height="0.75"/><rect x="39.2" y="10.9" width="5.3" height="0.75"/></g>
<g fill="#555"><rect x="52.6" y="6.4" width="0.7" height="2"/><rect x="52.2" y="10.3" width="1.4" height="2"/><rect x="54.6" y="7" width="5.3" height="0.75"/><rect x="54.6" y="10.9" width="5.3" height="0.75"/></g>
<path d="M69.6 10.6 L72.4 7.6 M69 8.6 L68.3 9.4 Q67.2 10.7 68.4 11.8 Q69.6 12.8 70.8 11.6 L71.4 11 M73 9.4 L73.8 8.6 Q74.9 7.3 73.7 6.3 Q72.5 5.4 71.3 6.5 L70.6 7.2" fill="none" stroke="#555" stroke-width="0.85"/>
<path d="M84.2 8 H88.3 Q90.8 8 90.8 10.3 Q90.8 12.3 88.3 12.3 H87.5 M85.6 6.6 L84 8 L85.6 9.4" fill="none" stroke="#999" stroke-width="0.75"/>
<path d="M105.2 8 H101.1 Q98.6 8 98.6 10.3 Q98.6 12.3 101.1 12.3 H101.9 M103.8 6.6 L105.4 8 L103.8 9.4" fill="none" stroke="#999" stroke-width="0.75"/>
</svg>
<div style="position:absolute;left:949.4px;top:644.83px;font-size:8.2px;line-height:1;color:#333;white-space:nowrap;transform:scaleX(0.808);transform-origin:0 0">CANCEL</div>
<div style="position:absolute;left:984px;top:637.6px;width:94.5px;height:21.399999999999977px;background:#fff;border-radius:3px"></div>
<div style="position:absolute;left:1005.8px;top:644.83px;font-size:8.2px;line-height:1;color:#f2a466;white-space:nowrap;transform:scaleX(0.799);transform-origin:0 0">SAVE AS DRAFT</div>
<div style="position:absolute;left:1086.5px;top:644.83px;font-size:8.2px;line-height:1;color:#333;white-space:nowrap;transform:scaleX(0.808);transform-origin:0 0">SAVE</div>
</body></html>
